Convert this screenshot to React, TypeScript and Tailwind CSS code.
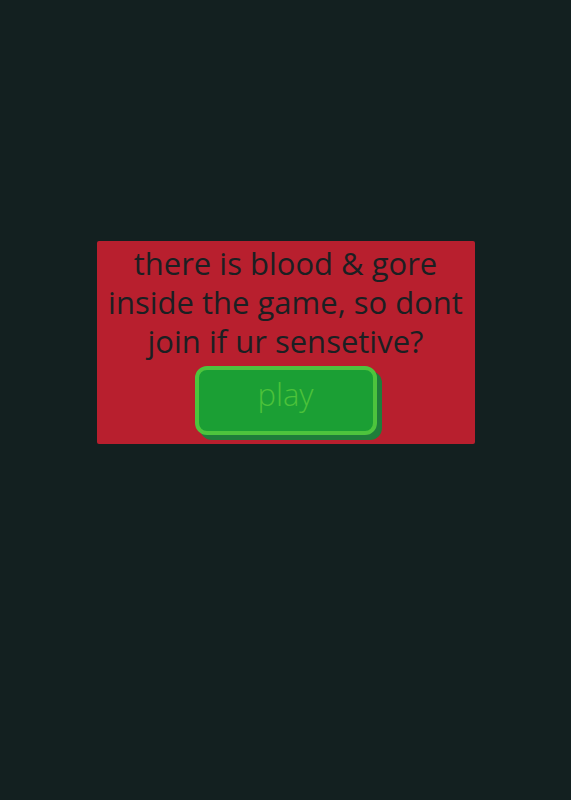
export default function App() {
  return (
    <div className="min-h-[800px] w-full bg-[#132020] flex justify-center pt-[241px]">
      <div className="w-[378px] h-[203px] bg-[#b81f2e] rounded-[2px] flex flex-col items-center pt-[3px]">
        <p
          className="text-[31px] leading-[39px] font-medium text-[#1b1f22] text-center whitespace-nowrap"
          style={{ fontFamily: '"Open Sans", "Noto Sans", sans-serif' }}
        >
          there is blood &amp; gore
          <br />
          inside the game, so dont
          <br />
          join if ur sensetive?
        </p>
        <button
          className="mt-[5px] w-[182px] h-[69px] rounded-[12px] bg-[#1b9f34] border-[4px] border-[#4dc43d] text-[#4cc23a] text-[31px] font-light shadow-[5px_5px_0_#1f7d3a] flex items-center justify-center pb-[12px]"
          style={{ fontFamily: '"Open Sans", "Noto Sans", sans-serif' }}
        >
          play
        </button>
      </div>
    </div>
  );
}
